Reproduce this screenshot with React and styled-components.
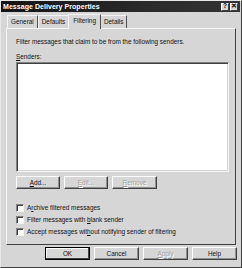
import React from 'react'
import styled, { createGlobalStyle } from 'styled-components'

const Global = createGlobalStyle`
  html, body { margin: 0; padding: 0; background: #d6d6d6; }
  body { font-family: "Liberation Sans", Arial, sans-serif; }
`

const Window = styled.div`
  width: 242px;
  height: 268px;
  box-sizing: border-box;
  background: #d6d6d6;
  border-left: 1px solid #e8e8e8;
  border-top: 1px solid #e8e8e8;
  border-right: 1px solid #404040;
  border-bottom: 1px solid #404040;
  display: flex;
  flex-direction: column;
  font-size: 6.4px;
  color: #111;
`
const TitleBar = styled.div`
  height: 11px;
  margin: 0 1px 0 0;
  background: linear-gradient(90deg, #141414, #2a2a2a 60%, #333);
  display: flex;
  align-items: center;
  justify-content: space-between;
  padding: 0 2px 0 2px;
`
const Title = styled.span`
  color: #fff;
  font-weight: bold;
  font-size: 7px;
  letter-spacing: 0.05px;
`
const Caps = styled.div`
  display: flex;
  gap: 1px;
`
const CapButton = styled.div`
  width: 8px;
  height: 8px;
  background: #d6d6d6;
  border: 1px solid;
  border-color: #fff #404040 #404040 #fff;
  box-sizing: border-box;
  display: flex;
  align-items: center;
  justify-content: center;
  font-weight: bold;
  font-size: 6.5px;
  line-height: 1;
  color: #000;
`
const TabStrip = styled.div`
  display: flex;
  align-items: flex-end;
  height: 15px;
  margin-top: 1px;
  padding-left: 6px;
`
const Tab = styled.div`
  height: ${p => (p.active ? '15px' : '13px')};
  box-sizing: border-box;
  padding: ${p => (p.active ? '2px 4px 0' : '2px 3px 0')};
  margin: ${p => (p.active ? '0 -1px -1px -1px' : '0')};
  position: relative;
  z-index: ${p => (p.active ? 2 : 1)};
  background: #d6d6d6;
  border-left: 1px solid #f4f4f4;
  border-top: 1px solid #f4f4f4;
  border-right: 1px solid #505050;
  border-radius: 1px 1px 0 0;
  line-height: 8px;
`
const Panel = styled.div`
  height: 217px;
  margin: 0 5px 0 5px;
  box-sizing: border-box;
  border: 1px solid;
  border-color: #f4f4f4 #404040 #404040 #f4f4f4;
  padding: 9px 6px 0 9px;
  display: flex;
  flex-direction: column;
`
const Label = styled.div`
  line-height: 8px;
  margin-bottom: ${p => p.gap || 0}px;
`
const Key = styled.span`
  text-decoration: underline;
`
const ListBox = styled.div`
  height: 108px;
  background: #fff;
  border: 1px solid;
  border-color: #808080 #f4f4f4 #f4f4f4 #808080;
  box-shadow: inset 1px 1px 0 #404040, inset -1px -1px 0 #d6d6d6;
  margin-top: 1px;
`
const ButtonRow = styled.div`
  display: flex;
  gap: 4px;
  margin-top: 4px;
  justify-content: ${p => p.end ? 'flex-end' : 'flex-start'};
`
const Button = styled.div`
  width: ${p => p.w || 45}px;
  height: 13px;
  box-sizing: border-box;
  background: #d6d6d6;
  border: 1px solid;
  border-color: ${p => p.def ? '#000' : '#fff #404040 #404040 #fff'};
  box-shadow: ${p => p.def ? 'inset -1px -1px 0 #404040, inset 1px 1px 0 #fff' : 'inset -1px -1px 0 #909090'};
  display: flex;
  align-items: center;
  justify-content: center;
  color: ${p => p.disabled ? '#a0a0a0' : '#111'};
  text-shadow: ${p => p.disabled ? '1px 1px 0 #fff' : 'none'};
`
const Checks = styled.div`
  display: flex;
  flex-direction: column;
  gap: 4px;
  margin-top: 15px;
`
const CheckRow = styled.div`
  display: flex;
  align-items: center;
  gap: 3px;
  line-height: 8px;
`
const Box = styled.span`
  width: 8px;
  height: 8px;
  box-sizing: border-box;
  background: #fff;
  border: 1px solid;
  border-color: #808080 #f4f4f4 #f4f4f4 #808080;
  box-shadow: inset 1px 1px 0 #404040;
`
const Footer = styled.div`
  display: flex;
  justify-content: flex-end;
  gap: 4px;
  padding: 2px 4px 0 0;
`

export default function App() {
  return (
    <>
      <Global />
      <Window>
        <TitleBar>
          <Title>Message Delivery Properties</Title>
          <Caps>
            <CapButton>?</CapButton>
            <CapButton>✕</CapButton>
          </Caps>
        </TitleBar>
        <TabStrip>
          <Tab>General</Tab>
          <Tab>Defaults</Tab>
          <Tab active>Filtering</Tab>
          <Tab>Details</Tab>
        </TabStrip>
        <Panel>
          <Label gap={7}>Filter messages that claim to be from the following senders.</Label>
          <Label><Key>S</Key>enders:</Label>
          <ListBox />
          <ButtonRow>
            <Button w={44}><span><Key>A</Key>dd...</span></Button>
            <Button w={44} disabled><span><Key>E</Key>dit...</span></Button>
            <Button w={45} disabled><span><Key>R</Key>emove</span></Button>
          </ButtonRow>
          <Checks>
            <CheckRow><Box /><span>A<Key>r</Key>chive filtered messages</span></CheckRow>
            <CheckRow><Box /><span>Filter messages with <Key>b</Key>lank sender</span></CheckRow>
            <CheckRow><Box /><span>Accept messages wit<Key>h</Key>out notifying sender of filtering</span></CheckRow>
          </Checks>
        </Panel>
        <Footer>
          <Button def>OK</Button>
          <Button>Cancel</Button>
          <Button disabled><span><Key>A</Key>pply</span></Button>
          <Button>Help</Button>
        </Footer>
      </Window>
    </>
  )
}
